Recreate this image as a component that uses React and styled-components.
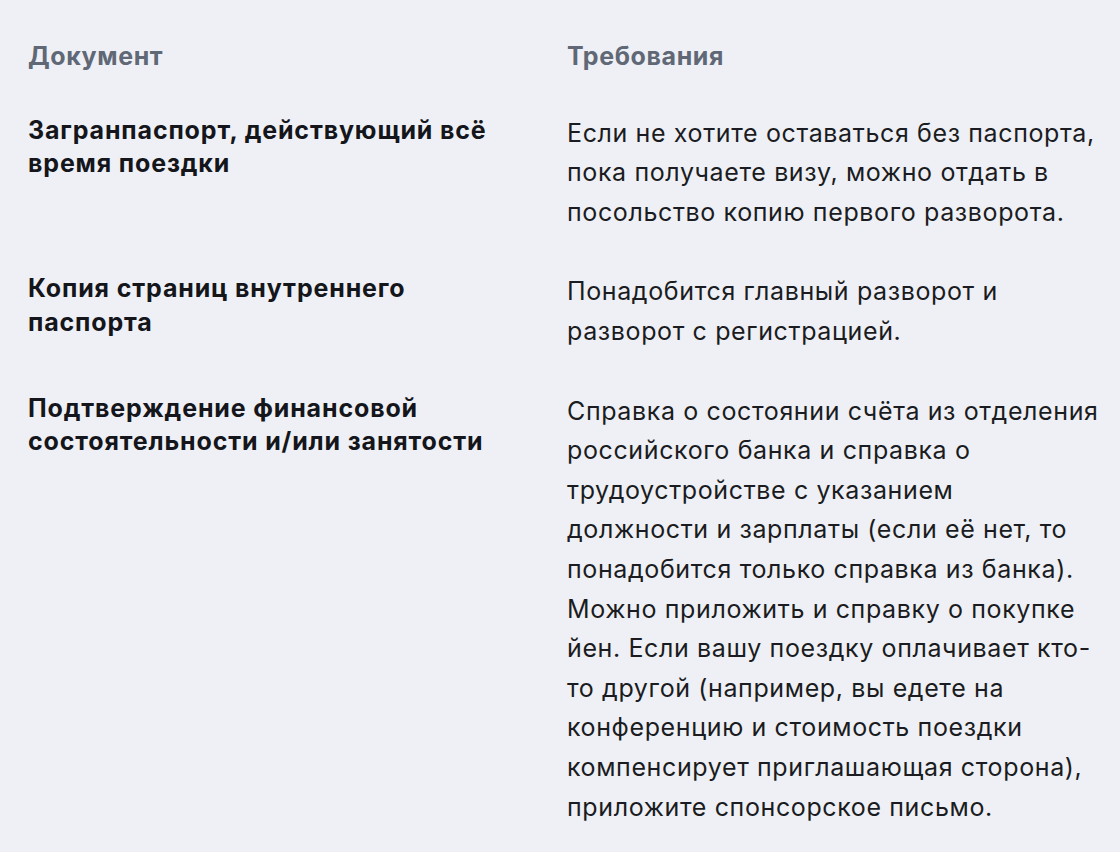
import React from "react";
import styled, { createGlobalStyle } from "styled-components";

const GlobalStyle = createGlobalStyle`
  body {
    margin: 0;
    background: #eff0f5;
    font-family: Inter, "Noto Sans", sans-serif;
    color: #15171c;
    -webkit-font-smoothing: antialiased;
  }
`;

const Page = styled.div`
  padding: 20px 12px 0 28px;
`;

const Table = styled.table`
  width: 100%;
  border-collapse: collapse;
  table-layout: fixed;
`;

const Col = styled.col`
  width: ${(p) => p.$width || "auto"};
`;

const HeadCell = styled.th`
  padding: 20px 0;
  text-align: left;
  vertical-align: top;
  font-size: 25px;
  line-height: 33.6px;
  font-weight: 700;
  letter-spacing: 0.6px;
  color: #606876;
`;

const NameCell = styled.td`
  padding: 20px 40px 20px 0;
  vertical-align: top;
  font-size: 25px;
  line-height: 33.6px;
  font-weight: 700;
  letter-spacing: 0.85px;
  color: #14161b;
`;

const TextCell = styled.td`
  padding: 20px 0;
  vertical-align: top;
  font-size: 25px;
  line-height: 39.6px;
  font-weight: 400;
  letter-spacing: 0.62px;
  color: #1a1c21;
`;

const rows = [
  {
    name: "Загранпаспорт, действующий всё время поездки",
    text: "Если не хотите оставаться без паспорта, пока получаете визу, можно отдать в посольство копию первого разворота.",
  },
  {
    name: "Копия страниц внутреннего паспорта",
    text: "Понадобится главный разворот и разворот с регистрацией.",
  },
  {
    name: "Подтверждение финансовой состоятельности и/или занятости",
    text:
      "Справка о состоянии счёта из отделения российского банка и справка о трудоустройстве с указанием должности\u00A0и\u00A0зарплаты (если её нет, то понадобится только справка из банка). Можно приложить и справку о покупке йен. Если вашу поездку оплачивает кто-то другой (например, вы едете на конференцию и стоимость поездки компенсирует приглашающая сторона), приложите спонсорское письмо.",
  },
];

const App = () => {
  return (
    <>
      <GlobalStyle />
      <Page>
        <Table>
          <colgroup>
            <Col $width="539px" />
            <Col />
          </colgroup>
          <thead>
            <tr>
              <HeadCell>Документ</HeadCell>
              <HeadCell>Требования</HeadCell>
            </tr>
          </thead>
          <tbody>
            {rows.map((row) => (
              <tr key={row.name}>
                <NameCell>{row.name}</NameCell>
                <TextCell>{row.text}</TextCell>
              </tr>
            ))}
          </tbody>
        </Table>
      </Page>
    </>
  );
};

export default App;
